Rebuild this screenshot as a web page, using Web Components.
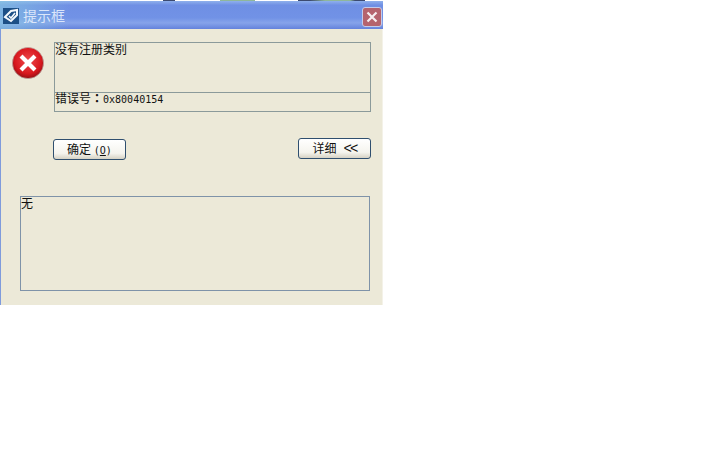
<!DOCTYPE html>
<html>
<head>
<meta charset="utf-8">
<title>提示框</title>
<style>
  html, body { margin: 0; background: #fff; }
  body { font: 12px "Noto Sans CJK SC", "Liberation Sans", sans-serif; color: #111; }
  .latin { font: 10px "DejaVu Sans Mono", monospace; }
  .colon { font-family: "Noto Sans CJK TC", sans-serif; font-weight: 700; }
  .chev { font: 14px "Liberation Mono", monospace; letter-spacing: -2px; margin-left: 7px; }
</style>
</head>
<body>
<error-dialog heading="提示框">
  <icon-error slot="icon"></icon-error>
  <span slot="message">没有注册类别</span>
  <span slot="code">错误号<span class="colon">：</span><span class="latin">0x80040154</span></span>
  <dialog-button slot="ok" style="margin-top:1px"><span>确定 <span class="latin">(<u>O</u>)</span></span></dialog-button>
  <dialog-button slot="more"><span>详细<span class="chev">&lt;&lt;</span></span></dialog-button>
  <span slot="detail">无</span>
</error-dialog>

<script>
class IconError extends HTMLElement {
  constructor() {
    super()
    this.attachShadow({ mode: 'open' }).innerHTML = `
      <style>:host { display: block; width: 32px; height: 32px; } svg { display: block; }</style>
      <svg width="32" height="32" viewBox="0 0 32 32">
        <defs>
          <radialGradient id="r" cx="50%" cy="42%" r="60%">
            <stop offset="0" stop-color="#ee4a4c"/>
            <stop offset="0.7" stop-color="#d8181e"/>
            <stop offset="1" stop-color="#8e0e12"/>
          </radialGradient>
        </defs>
        <circle cx="16" cy="16" r="15.6" fill="url(#r)" stroke="#b9a7a0" stroke-width="0.7"/>
        <path d="M10.5 10.5 L21.5 21.5 M21.5 10.5 L10.5 21.5" stroke="#fff" stroke-width="4.2" stroke-linecap="square"/>
      </svg>`
  }
}

class DialogButton extends HTMLElement {
  constructor() {
    super()
    this.attachShadow({ mode: 'open' }).innerHTML = `
      <style>
        :host {
          display: flex;
          align-items: center;
          justify-content: center;
          box-sizing: border-box;
          width: 73px;
          height: 21px;
          border: 1px solid #2f4f6f;
          border-radius: 3px;
          background: linear-gradient(#fff, #f5f4ee 70%, #d6d2c4);
          font-size: 12px;
          line-height: 1;
          color: #111;
          white-space: nowrap;
        }
      </style>
      <slot></slot>`
  }
}

class ErrorDialog extends HTMLElement {
  constructor() {
    super()
    this.attachShadow({ mode: 'open' }).innerHTML = `
      <style>
        :host { display: block; width: 383px; height: 305px; }
        .strip {
          height: 1px;
          background: linear-gradient(90deg, #fff 163px, #3c4a70 163px, #3c4a70 175px, #fff 175px,
            #fff 220px, #8fb79a 220px, #8fb79a 255px, #fff 255px, #fff 298px, #3c4a70 298px, #3c4a70 310px,
            #8fb79a 325px, #8fb79a 350px, #3c4a70 355px, #3c4a70 365px, #fff 365px);
        }
        .title {
          display: flex;
          align-items: center;
          gap: 4px;
          box-sizing: border-box;
          height: 28px;
          padding: 0 1px 0 3px;
          background:
            linear-gradient(90deg, rgba(135,200,225,.65), rgba(135,200,225,0) 70px),
            linear-gradient(#8fb0ec, #6f8fe4 15%, #7192e6 60%, #86a3ea 78%, #6482dc);
          color: #dbe6fa;
          font-size: 14px;
        }
        .title svg { display: block; }
        .title .logo { margin-top: 2px; }
        .title .name { flex: 1; }
        .close {
          display: flex;
          align-items: center;
          justify-content: center;
          box-sizing: border-box;
          width: 20px;
          height: 20px;
          margin-top: 4px;
          border: 1px solid #c3cbea;
          border-radius: 3px;
          background: #b5636d;
        }
        .body {
          box-sizing: border-box;
          height: 276px;
          border-left: 1px solid #7f9bdc;
          border-right: 1px solid #f4f2e8;
          background: #ece9d8;
          padding: 13px 11px 0 11px;
        }
        .top { display: flex; }
        .icon { width: 42px; padding-top: 5px; }
        .msg {
          box-sizing: border-box;
          width: 317px;
          height: 70px;
          border: 1px solid #8b9a9a;
          display: flex;
          flex-direction: column;
        }
        .msg .m { flex: 1; line-height: 12px; }
        .msg .c { height: 18px; border-top: 1px solid #8b9a9a; line-height: 10px; }
        .buttons {
          display: flex;
          justify-content: space-between;
          align-items: flex-start;
          width: 318px;
          margin: 26px 0 0 41px;
        }
        .detail {
          box-sizing: border-box;
          width: 350px;
          height: 95px;
          margin: 36px 0 0 8px;
          border: 1px solid #7f93a8;
          line-height: 12px;
        }
      </style>
      <div class="strip"></div>
      <div class="title">
        <svg class="logo" width="16" height="16" viewBox="0 0 16 16">
          <rect width="16" height="16" fill="#1c4f86"/>
          <path d="M2 9 L8 3 L14 2 L14 7 L8 13 Z" fill="none" stroke="#f4f8fc" stroke-width="2"/>
          <path d="M6 8 L8 10 L12 5" fill="none" stroke="#f4f8fc" stroke-width="1.6"/>
        </svg>
        <span class="name">${this.getAttribute('heading')}</span>
        <span class="close">
          <svg width="14" height="14" viewBox="0 0 14 14">
            <path d="M2.5 2.5 L11.5 11.5 M11.5 2.5 L2.5 11.5" stroke="#f6eef0" stroke-width="2.2"/>
          </svg>
        </span>
      </div>
      <div class="body">
        <div class="top">
          <div class="icon"><slot name="icon"></slot></div>
          <div class="msg">
            <div class="m"><slot name="message"></slot></div>
            <div class="c"><slot name="code"></slot></div>
          </div>
        </div>
        <div class="buttons">
          <slot name="ok"></slot>
          <slot name="more"></slot>
        </div>
        <div class="detail"><slot name="detail"></slot></div>
      </div>`
  }
}

customElements.define('icon-error', IconError)
customElements.define('dialog-button', DialogButton)
customElements.define('error-dialog', ErrorDialog)
</script>
</body>
</html>
